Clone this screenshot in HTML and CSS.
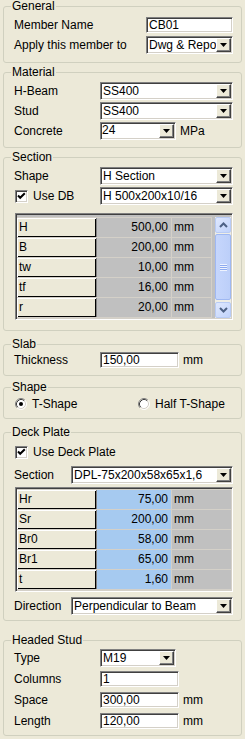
FILE: index.html
```html
<!DOCTYPE html>
<html>
<head>
<meta charset="utf-8">
<link rel="stylesheet" href="styles.css">
</head>
<body>
<div class="panel">

  <section class="group g-general">
    <div class="title">General</div>
    <div class="rows">
      <div class="row"><span class="lbl w132">Member Name</span><span class="edit fill">CB01</span></div>
      <div class="row"><span class="lbl w132">Apply this member to</span><span class="combo fill"><span class="val">Dwg &amp; Report</span><span class="btn"></span></span></div>
    </div>
  </section>

  <section class="group g-material">
    <div class="title">Material</div>
    <div class="rows">
      <div class="row"><span class="lbl w86">H-Beam</span><span class="combo fill"><span class="val">SS400</span><span class="btn"></span></span></div>
      <div class="row"><span class="lbl w86">Stud</span><span class="combo fill"><span class="val">SS400</span><span class="btn"></span></span></div>
      <div class="row"><span class="lbl w86">Concrete</span><span class="combo short"><span class="val up">24</span><span class="btn"></span></span><span class="unit">MPa</span></div>
    </div>
  </section>

  <section class="group g-section">
    <div class="title">Section</div>
    <div class="rows">
      <div class="row"><span class="lbl w86">Shape</span><span class="combo fill"><span class="val">H Section</span><span class="btn"></span></span></div>
      <div class="row"><span class="lbl w86 chkl"><span class="chk"><svg width="9" height="9" viewBox="0 0 9 9"><path d="M1 3.5 L3.2 5.8 L7.8 1.2" stroke="#000" stroke-width="2" fill="none"/></svg></span>Use DB</span><span class="combo fill"><span class="val">H 500x200x10/16</span><span class="btn"></span></span></div>
    </div>
    <div class="grid grid-sec">
      <div class="tbl">
        <div class="gr"><span class="hd">H</span><span class="v">500,00</span><span class="u">mm</span></div>
        <div class="gr"><span class="hd">B</span><span class="v">200,00</span><span class="u">mm</span></div>
        <div class="gr"><span class="hd">tw</span><span class="v">10,00</span><span class="u">mm</span></div>
        <div class="gr"><span class="hd">tf</span><span class="v">16,00</span><span class="u">mm</span></div>
        <div class="gr"><span class="hd">r</span><span class="v">20,00</span><span class="u">mm</span></div>
      </div>
      <div class="gapcol"></div>
      <div class="sb">
        <div class="sbbtn"><svg width="9" height="6" viewBox="0 0 9 6"><path d="M1 5 L4.5 1.5 L8 5" stroke="#4d6185" stroke-width="2" fill="none"/></svg></div>
        <div class="thumb"><span class="grip"></span></div>
        <div class="sbbtn"><svg width="9" height="6" viewBox="0 0 9 6"><path d="M1 1 L4.5 4.5 L8 1" stroke="#4d6185" stroke-width="2" fill="none"/></svg></div>
      </div>
    </div>
  </section>

  <section class="group g-slab">
    <div class="title">Slab</div>
    <div class="rows">
      <div class="row"><span class="lbl w86">Thickness</span><span class="edit tb">150,00</span><span class="unit">mm</span></div>
    </div>
  </section>

  <section class="group g-shape">
    <div class="title">Shape</div>
    <div class="rows">
      <div class="row">
        <span class="opt o1"><svg class="radio" width="12" height="12" viewBox="0 0 12 12"><circle cx="6" cy="6" r="5" fill="#fff"/><path d="M2.11 9.89 A5.5 5.5 0 0 1 9.89 2.11" stroke="#808080" fill="none"/><path d="M9.89 2.11 A5.5 5.5 0 0 1 2.11 9.89" stroke="#fff" fill="none"/><path d="M2.82 9.18 A4.5 4.5 0 0 1 9.18 2.82" stroke="#404040" fill="none"/><path d="M9.18 2.82 A4.5 4.5 0 0 1 2.82 9.18" stroke="#d4d0c8" fill="none"/><circle cx="6" cy="6" r="2" fill="#000"/></svg>T-Shape</span>
        <span class="opt"><svg class="radio" width="12" height="12" viewBox="0 0 12 12"><circle cx="6" cy="6" r="5" fill="#fff"/><path d="M2.11 9.89 A5.5 5.5 0 0 1 9.89 2.11" stroke="#808080" fill="none"/><path d="M9.89 2.11 A5.5 5.5 0 0 1 2.11 9.89" stroke="#fff" fill="none"/><path d="M2.82 9.18 A4.5 4.5 0 0 1 9.18 2.82" stroke="#404040" fill="none"/><path d="M9.18 2.82 A4.5 4.5 0 0 1 2.82 9.18" stroke="#d4d0c8" fill="none"/></svg>Half T-Shape</span>
      </div>
    </div>
  </section>

  <section class="group g-deck">
    <div class="title">Deck Plate</div>
    <div class="rows">
      <div class="row"><span class="lbl chkl"><span class="chk"><svg width="9" height="9" viewBox="0 0 9 9"><path d="M1 3.5 L3.2 5.8 L7.8 1.2" stroke="#000" stroke-width="2" fill="none"/></svg></span>Use Deck Plate</span></div>
      <div class="row r2"><span class="lbl w57">Section</span><span class="combo fill"><span class="val">DPL-75x200x58x65x1,6</span><span class="btn"></span></span></div>
    </div>
    <div class="grid grid-deck">
      <div class="tbl">
        <div class="gr"><span class="hd">Hr</span><span class="v">75,00</span><span class="u">mm</span></div>
        <div class="gr"><span class="hd">Sr</span><span class="v">200,00</span><span class="u">mm</span></div>
        <div class="gr"><span class="hd">Br0</span><span class="v">58,00</span><span class="u">mm</span></div>
        <div class="gr"><span class="hd">Br1</span><span class="v">65,00</span><span class="u">mm</span></div>
        <div class="gr"><span class="hd">t</span><span class="v">1,60</span><span class="u">mm</span></div>
      </div>
    </div>
    <div class="rows dir">
      <div class="row"><span class="lbl w57">Direction</span><span class="combo fill"><span class="val">Perpendicular to Beam</span><span class="btn"></span></span></div>
    </div>
  </section>

  <section class="group g-stud">
    <div class="title">Headed Stud</div>
    <div class="rows">
      <div class="row"><span class="lbl w86">Type</span><span class="combo short"><span class="val">M19</span><span class="btn"></span></span></div>
      <div class="row r21"><span class="lbl w86">Columns</span><span class="edit tb">1</span></div>
      <div class="row r21"><span class="lbl w86">Space</span><span class="edit tb">300,00</span><span class="unit">mm</span></div>
      <div class="row r21"><span class="lbl w86">Length</span><span class="edit tb">120,00</span><span class="unit">mm</span></div>
    </div>
  </section>

</div>
</body>
</html>
```

FILE: styles.css
```css
* { box-sizing: border-box; }
html, body { margin: 0; padding: 0; }
body {
  width: 245px;
  height: 739px;
  overflow: hidden;
  background: #ece9d8;
  font-family: "Liberation Sans", Arial, sans-serif;
  font-size: 12px;
  color: #000;
}
.panel { display: flex; flex-direction: column; padding-top: 6px; }

.group {
  margin: 0 3px;
  border: 1px solid #d0d0bf;
  border-radius: 3px;
  padding: 0 8px 0 10px;
}
.title {
  margin: -7px 0 0 -3px;
  padding: 0 1px;
  background: #ece9d8;
  width: max-content;
  height: 12px;
  line-height: 12px;
}

.g-general { padding-bottom: 7px; }
.g-general .rows { padding-top: 3px; }
.g-material { margin-top: 9px; padding-bottom: 6px; }
.g-material .rows { padding-top: 3px; }
.g-section { margin-top: 9px; padding-bottom: 10px; }
.g-section .rows { padding-top: 3px; }
.g-slab { margin-top: 13px; padding-bottom: 5px; }
.g-shape { margin-top: 11px; padding-bottom: 4px; }
.g-shape .rows { padding-top: 1px; }
.g-deck { margin-top: 13px; padding-bottom: 4px; }
.g-deck .rows { padding-top: 4px; }
.g-deck .rows.dir { padding-top: 4px; }
.g-stud { margin-top: 19px; padding-bottom: 4px; }
.g-stud .rows { padding-top: 2px; }

.row { display: flex; align-items: center; height: 20px; }
.row.r2 { margin-top: 3px; }
.row.r21 { height: 21px; }

.lbl { flex: none; white-space: nowrap; }
.w132 { width: 132px; }
.w86 { width: 86px; }
.w57 { width: 57px; }

.edit, .combo, .chk, .grid {
  border: 1px solid;
  border-color: #808080 #fff #fff #808080;
  box-shadow: inset 1px 1px #404040, inset -1px -1px #d4d0c8;
  background: #fff;
}
.edit {
  height: 16px;
  padding: 1px 2px 0;
  line-height: 12px;
  white-space: nowrap;
  overflow: hidden;
}
.fill { flex: 1; min-width: 0; }
.tb { width: 79px; flex: none; }
.short { width: 76px; flex: none; }

.combo {
  height: 18px;
  padding: 1px;
  display: flex;
}
.combo .val {
  flex: 1;
  min-width: 0;
  padding-left: 1px;
  line-height: 15px;
  white-space: nowrap;
  overflow: hidden;
}
.combo .val.up { line-height: 12px; padding-left: 0; }
.combo .btn {
  flex: none;
  width: 15px;
  background: #ece9d8;
  border: 1px solid;
  border-color: #fff #404040 #404040 #fff;
  box-shadow: inset -1px -1px #808080;
  display: flex;
  align-items: center;
  justify-content: center;
}
.combo .btn::after {
  content: "";
  width: 7px;
  height: 4px;
  background: #000;
  clip-path: polygon(0 0, 100% 0, 50% 100%);
}
.unit { margin-left: 4px; }

.chkl { display: flex; align-items: center; }
.chk {
  width: 13px;
  height: 13px;
  margin: 0 5px 0 1px;
  display: flex;
  align-items: center;
  justify-content: center;
}
.chk svg { display: block; }

.opt { display: flex; align-items: center; margin-left: 1px; }
.opt.o1 { width: 122px; }
.radio { display: block; margin-right: 5px; }

/* grids */
.grid {
  margin-left: 1px;
  width: 218px;
  padding: 1px;
  display: flex;
  background: #c0c0c0;
}
.grid-sec { height: 107px; margin-top: 7px; }
.grid-sec .tbl { padding-top: 2px; }
.grid-deck { height: 105px; margin-top: 2px; }
.tbl { display: flex; flex-direction: column; flex: 1; }
.gr {
  display: grid;
  grid-template-columns: 80px 75px 1fr;
  height: 20px;
  border-top: 1px solid #d4d0c8;
}
.gr:last-child { height: 21px; border-bottom: 1px solid #d4d0c8; }
.grid-sec .gr { grid-template-columns: 80px 75px 40px; }
.hd {
  background: #ece9d8;
  box-shadow: inset 1px 1px #fff, inset -1px -1px #000;
  border-right: 1px solid #808080;
  padding-left: 2px;
  line-height: 19px;
}
.v {
  background: #c0c0c0;
  text-align: right;
  padding-right: 3px;
  line-height: 19px;
  border-right: 1px solid #d4d0c8;
}
.grid-deck .v { background: #a6caf0; }
.u {
  background: #c0c0c0;
  padding-left: 2px;
  line-height: 19px;
}
.grid-sec .u { border-right: 1px solid #d4d0c8; }
.gapcol { width: 3px; flex: none; }
.sb {
  width: 16px;
  flex: none;
  margin-top: 2px;
  height: 101px;
  display: flex;
  flex-direction: column;
  background: #eeede5;
}
.sbbtn {
  height: 16px;
  flex: none;
  border: 1px solid #b8cbf5;
  border-radius: 2px;
  background: linear-gradient(135deg, #dfe8fe, #c1d3fb);
  display: flex;
  align-items: center;
  justify-content: center;
}
.sbbtn svg { display: block; }
.thumb {
  height: 67px;
  margin: 1px 0 2px;
  border: 1px solid #9fb8f2;
  border-radius: 2px;
  background: linear-gradient(90deg, #c6d6fc, #bccff9);
  display: flex;
  align-items: center;
  justify-content: center;
}
.grip {
  width: 7px;
  height: 7px;
  background: repeating-linear-gradient(180deg, #eef3fe 0 1px, #8daaf0 1px 2px);
}
```
